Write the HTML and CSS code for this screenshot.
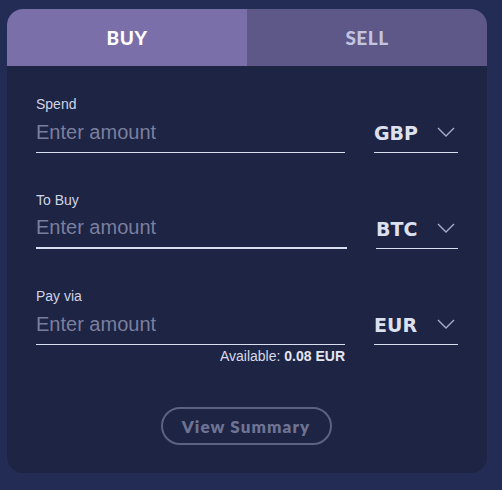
FILE: index.html
```html
<!DOCTYPE html>
<html>
<head>
<meta charset="utf-8">
<link rel="stylesheet" href="styles.css">
</head>
<body>
<div class="page">
  <div class="card">
    <div class="tabs">
      <div class="tab tab-active">BUY</div>
      <div class="tab tab-idle">SELL</div>
    </div>
    <div class="body">
      <div class="field">
        <div class="label">Spend</div>
        <div class="row">
          <div class="input">Enter amount</div>
          <div class="currency"><span class="code">GBP</span>
            <svg class="chev" width="18" height="10" viewBox="0 0 18 10"><path d="M1 1 L9 9 L17 1" fill="none" stroke="#a6abcc" stroke-width="1.4"/></svg>
          </div>
        </div>
      </div>
      <div class="field">
        <div class="label">To Buy</div>
        <div class="row">
          <div class="input input-focus">Enter amount</div>
          <div class="currency"><span class="code">BTC</span>
            <svg class="chev" width="18" height="10" viewBox="0 0 18 10"><path d="M1 1 L9 9 L17 1" fill="none" stroke="#a6abcc" stroke-width="1.4"/></svg>
          </div>
        </div>
      </div>
      <div class="field field-last">
        <div class="label">Pay via</div>
        <div class="row">
          <div class="input">Enter amount</div>
          <div class="currency"><span class="code">EUR</span>
            <svg class="chev" width="18" height="10" viewBox="0 0 18 10"><path d="M1 1 L9 9 L17 1" fill="none" stroke="#a6abcc" stroke-width="1.4"/></svg>
          </div>
        </div>
        <div class="available">Available: <b>0.08 EUR</b></div>
      </div>
      <div class="actions">
        <div class="btn">View Summary</div>
      </div>
    </div>
  </div>
</div>
</body>
</html>
```

FILE: styles.css
```css
html, body {
  margin: 0;
  padding: 0;
  background: #232c55;
}
.page {
  width: 502px;
  height: 490px;
  box-sizing: border-box;
  padding: 9px 0 0 7px;
  background: #232c55;
  font-family: "Liberation Sans", Arial, sans-serif;
}
.card {
  width: 480px;
  height: 464px;
  background: #1d2444;
  border-radius: 16px;
  overflow: hidden;
  display: flex;
  flex-direction: column;
}
.tabs {
  display: flex;
  height: 57px;
  flex-shrink: 0;
}
.tab {
  flex: 1;
  display: flex;
  align-items: center;
  justify-content: center;
  font-family: Lato, "Noto Sans", sans-serif;
  font-weight: 900;
  font-size: 19px;
  letter-spacing: 0.5px;
}
.tab-active {
  background: #7a6fa8;
  color: #ffffff;
}
.tab-idle {
  background: #5d5887;
  color: #c3c4de;
}
.body {
  padding: 30px 29px 28px 29px;
  display: flex;
  flex-direction: column;
  flex-shrink: 0;
}
.field {
  margin-bottom: 39px;
}
.field-last {
  margin-bottom: 0;
}
.label {
  font-size: 14px;
  line-height: 16px;
  color: #d0d4e6;
}
.row {
  display: flex;
  gap: 29px;
}
.input {
  width: 309px;
  height: 40px;
  border-bottom: 1px solid #d9ddf0;
  display: flex;
  align-items: center;
  font-size: 20px;
  color: #7b7f9e;
}
.input-focus {
  width: 311px;
  border-bottom: 2px solid #d9ddf0;
  height: 39px;
}
.currency {
  flex: 1;
  height: 40px;
  border-bottom: 1px solid #d9ddf0;
  display: flex;
  align-items: center;
  justify-content: space-between;
  padding-right: 3px;
}
.code {
  font-family: "DejaVu Sans", sans-serif;
  font-weight: 700;
  font-size: 19px;
  color: #dde0ee;
  margin-top: 2px;
}
.chev {
  display: block;
}
.available {
  width: 309px;
  margin-top: 3px;
  text-align: right;
  font-size: 14px;
  line-height: 16px;
  color: #d7daea;
}
.available b {
  color: #e4e6f2;
}
.actions {
  margin-top: 43px;
  display: flex;
  justify-content: center;
  padding-right: 2px;
}
.btn {
  width: 171px;
  height: 38px;
  box-sizing: border-box;
  border: 2px solid #5d6282;
  border-radius: 19px;
  display: flex;
  align-items: center;
  justify-content: center;
  font-family: Lato, "Noto Sans", sans-serif;
  font-weight: 800;
  font-size: 17px;
  color: #6e7394;
  letter-spacing: 1.1px;
}
```
